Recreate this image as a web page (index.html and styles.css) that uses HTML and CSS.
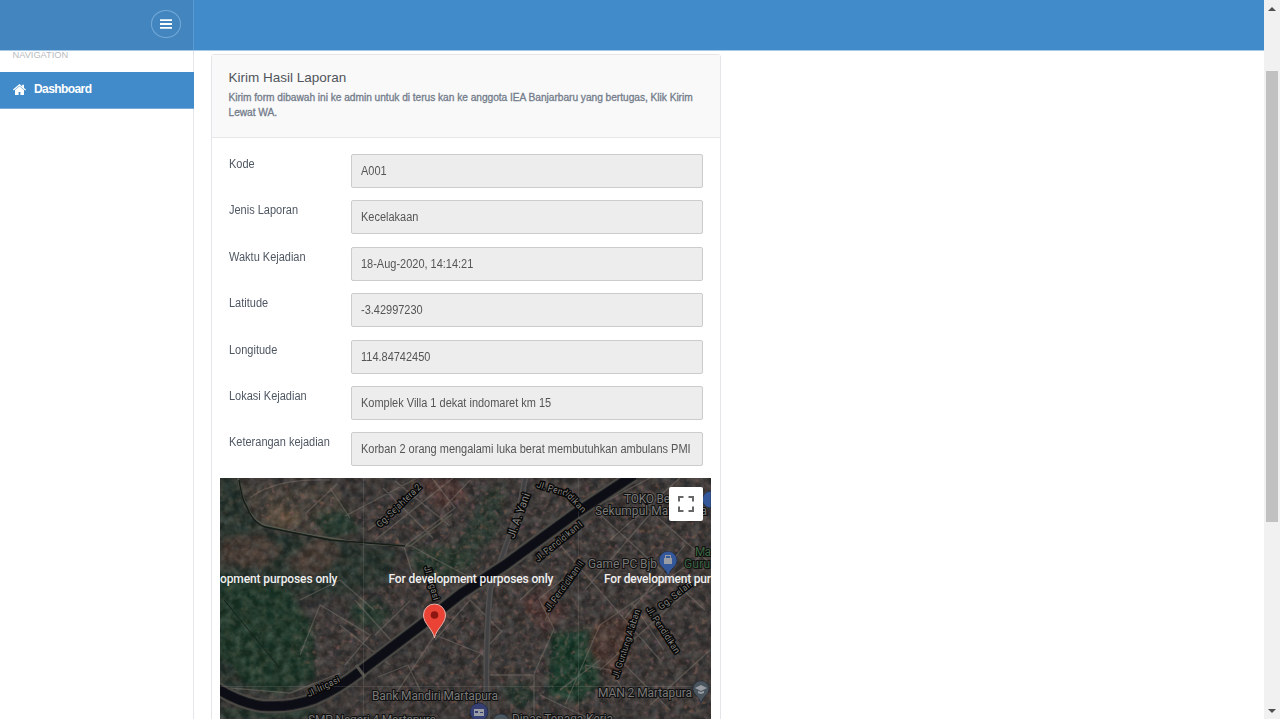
FILE: index.html
```html
<!DOCTYPE html>
<html lang="id">
<head>
<meta charset="utf-8">
<title>Kirim Hasil Laporan</title>
<link rel="stylesheet" href="styles.css">
</head>
<body>
<div class="app">
  <header class="topbar">
    <div class="brand">
      <button class="toggle" aria-label="Menu">
        <svg width="12" height="10" viewBox="0 0 12 10"><path d="M0 1.2h12M0 5h12M0 8.8h12" stroke="#fff" stroke-width="1.8"/></svg>
      </button>
    </div>
  </header>
  <div class="page">
    <nav class="sidebar">
      <div class="nav-title">NAVIGATION</div>
      <a class="nav-item">
        <svg width="13" height="11" viewBox="0 0 13 11" fill="#fff"><path d="M6.5 0 0 5.6l.8.9 5.7-4.8 5.7 4.8.8-.9-2-1.7V.7H9.2v1.6z"/><path d="M6.5 2.3 2 6.1V11h3.6V7.9h1.8V11H11V6.1z"/></svg>
        <span>Dashboard</span>
      </a>
    </nav>
    <main class="content">
      <section class="card">
        <div class="card-head">
          <h1>Kirim Hasil Laporan</h1>
          <p>Kirim form dibawah ini ke admin untuk di terus kan ke anggota IEA Banjarbaru yang bertugas, Klik Kirim<br>Lewat WA.</p>
        </div>
        <div class="form">
          <div class="row"><label>Kode</label><div class="field"><span>A001</span></div></div>
          <div class="row"><label>Jenis Laporan</label><div class="field"><span>Kecelakaan</span></div></div>
          <div class="row"><label>Waktu Kejadian</label><div class="field"><span>18-Aug-2020, 14:14:21</span></div></div>
          <div class="row"><label>Latitude</label><div class="field"><span>-3.42997230</span></div></div>
          <div class="row"><label>Longitude</label><div class="field"><span>114.84742450</span></div></div>
          <div class="row"><label>Lokasi Kejadian</label><div class="field"><span>Komplek Villa 1 dekat indomaret km 15</span></div></div>
          <div class="row"><label>Keterangan kejadian</label><div class="field"><span>Korban 2 orang mengalami luka berat membutuhkan ambulans PMI</span></div></div>
        </div>
        <div class="map">
          <svg class="map-art" viewBox="220 478 491 241" width="491" height="241">
            <defs>
              <filter id="grain" x="0" y="0" width="100%" height="100%" color-interpolation-filters="sRGB">
                <feTurbulence type="fractalNoise" baseFrequency=".12" numOctaves="3" seed="8"/>
                <feColorMatrix values="1 .4 0 0 -.46  .9 .3 .2 0 -.48  .8 .3 .3 0 -.49  0 0 0 0 .26"/>
              </filter>
              <filter id="roofs" x="0" y="0" width="100%" height="100%" color-interpolation-filters="sRGB">
                <feTurbulence type="fractalNoise" baseFrequency=".2" numOctaves="2" seed="21"/>
                <feColorMatrix values=".5 0 0 0 .22  0 .2 0 0 .27  0 0 .35 0 .2  3 2.4 0 0 -2.75" result="c"/>
                <feGaussianBlur in="SourceGraphic" stdDeviation="4" result="s"/>
                <feComposite in="c" in2="s" operator="in"/>
              </filter>
              <filter id="soft" x="-20%" y="-20%" width="140%" height="140%"><feGaussianBlur stdDeviation="3"/></filter>
              <filter id="edge"><feGaussianBlur stdDeviation=".5"/></filter>
              <path id="canal" d="M634 475 576 513 505 565 462 593 420 626 362 670Q336 690 314 699Q290 708 262 706Q240 703 216 688"/>
            </defs>
            <rect x="220" y="478" width="491" height="241" fill="#3c3938"/>
            <g filter="url(#soft)">
              <path fill="#26352d" d="M215 475h24l7 34 22 22 80 12 50 6-10 35-40 10-48 4-35 25-10 28-12 45H215z"/>
              <path fill="#1d3a2a" d="M215 575l70 12 28 38 2 55-40 15-28-8-16-24-16-5z"/>
              <path fill="#47423a" d="M240 485h92l20 24-26 27-66-12z"/>
              <path fill="#4c4039" d="M286 562l34-27 22 18-30 27zM222 540l40-6 20 18-20 16-42-4z"/>
              <path fill="#6a5a44" d="M270 520l8-18 8 10 16 2-10 12-14 1z"/>
              <path fill="#223b2e" d="M312 515l32-6 18 22-36 8zM348 605l32-5 12 14-14 14-24-4z"/>
              <path fill="#263a2f" d="M410 548l45-2 26 14-40 24-26-12z"/>
              <path fill="#2b3a31" d="M488 490l18-6-8 50-24 22-22-4z"/>
              <path fill="#163e29" d="M552 634l38-4 10 54-20 18-32-6z"/>
              <path fill="#4c3831" d="M594 622l44-12-10 62-18 8-22-32z"/>
              <path fill="#24382d" d="M500 688l28-6 8 16-18 12zM220 708h100l-10 11h-90z"/>
              <path fill="#503736" d="M518 600l30-12 20 24-24 22zM415 478h40l14 20-30 12z"/>
            </g>
            <rect x="220" y="478" width="491" height="241" filter="url(#grain)"/>
            <g class="roofs" filter="url(#roofs)">
              <path d="M360 500l60-22H711V719H330L440 630 420 610 370 630 360 590 420 560 350 530z M370 600L300 625 290 650 320 680 380 650z M250 482l95 6-20 50-65-16z M225 690h80l-15 14h-60z"/>
            </g>
            <g class="streets" filter="url(#edge)">
              <path d="M345 516 417 478M375 540l78-62M383 488l50 50M395 481l55 45M406 545 455 508 432 478M404 546l8 27M410 545q35 20 68 36M305 514l32-30M330 488l20 30M368 530l50-35M250 498q25-20 80-18M300 600l40-20 34 30M300 655l20-50 50 30-25 30M340 625l50 40M355 600l40 45M375 635l35-34M395 695l40-60 50 20M420 690l-12-25-30 12M470 480l-28 30M435 640l35-40 32 32M475 660l28-30M490 675h44v44M534 674l20-45-15-30 30-25M565 705l35-80 110-75M600 670l105-95M620 660l50 50M595 510l110 100M630 493l80 70M560 545l100 115M570 520l80-42M585 590l70-82M610 540l70-62M625 618l60-73M664 650l-30-45M650 705l60-55M585 665l25 5 20 30M540 695l50 24M560 690l40-30M230 688l60 5 50-20M520 600l30-28M545 620l20-35"/>
            </g>
            <g class="roads" filter="url(#edge)">
              <path d="M238 478q4 20 9 28 6 15 18 19l35 8 68 11 42 2 42-32" stroke="#55574b" stroke-width="1.500"/>
              <path d="M239 480q3 20 8 27 6 16 18 20l65 13 75 6" stroke="#141d18" stroke-width="1.500"/>
              <path d="M224 600l55 67" stroke="#15211a"/>
              <path d="M525 478q-4 30-17 62l-18 50q-5 55-3 129" stroke="#52504f" stroke-width="6"/>
              <path d="M525 478q-4 30-17 62l-18 50q-5 55-3 129" stroke="#424345" stroke-width="3"/>
            </g>
            <g class="canal" filter="url(#edge)">
              <use href="#canal" stroke="#4c4944" stroke-width="14"/>
              <use href="#canal" stroke="#1c1e23" stroke-width="10"/>
              <use href="#canal" stroke="#0b0d12" stroke-width="8"/>
              <path d="M356 665l9 12" stroke="#55534e" stroke-width="3"/>
            </g>
            <path d="M363.500 478V719M578.500 478V719M220 686.500H711" stroke="#999" stroke-opacity=".18"/>
            <g class="street-name">
              <text transform="translate(380 528) rotate(-44)" textLength="58">Gg. Sejahtera 2</text>
              <text transform="translate(514 539) rotate(-70)" textLength="47" font-size="11">Jl. A. Yani</text>
              <text transform="translate(536 487) rotate(17)" textLength="32">Jl. Pend</text>
              <text transform="translate(565 495) rotate(46)" textLength="25">idikan</text>
              <text transform="translate(538 562) rotate(-39)" textLength="58">Jl. Pendidikan I</text>
              <text transform="translate(549 612) rotate(-54)" textLength="60">Jl. Pendidikan II</text>
              <text transform="translate(424 567) rotate(74)" textLength="35">Jl. Irigasi</text>
              <text transform="translate(309 697) rotate(-26)" textLength="35">Jl. Irigasi</text>
              <text transform="translate(618 679) rotate(-72)" textLength="72">Jl. Guntung Alaban</text>
              <text transform="translate(646 609) rotate(57)" textLength="54">Jl. Pendidikan</text>
              <text transform="translate(661 610) rotate(-38)" textLength="40">Gg. Selan</text>
            </g>
            <g class="place-name">
              <text x="624" y="503" textLength="46">TOKO Be</text>
              <text x="595" y="515" textLength="112">Sekumpul Martapura</text>
              <text x="588" y="568" textLength="69">Game PC Bjb</text>
              <text class="green" x="695" y="556" textLength="16">Ma</text>
              <text class="green" x="684" y="568" textLength="26">Guru</text>
              <text x="372" y="700" textLength="126">Bank Mandiri Martapura</text>
              <text x="598" y="697" textLength="94">MAN 2 Martapura</text>
              <text x="308" y="724" textLength="128">SMP Negeri 4 Martapura</text>
              <text x="512" y="723" textLength="101">Dinas Tenaga Kerja</text>
            </g>
            <g stroke="#182337" stroke-width=".5">
              <path fill="#34589a" d="M668 576q-2-6-6-9a9 9 0 1 1 12 0q-4 3-6 9z"/>
              <path fill="#34589a" d="M711 491a8 8 0 0 0 0 17z"/>
              <path fill="#4a555e" d="M701 703q-1-4-5-8a8 8 0 1 1 10 0q-4 4-5 8z"/>
              <circle cx="479" cy="712" r="9" fill="#363f74"/>
              <circle cx="501" cy="722" r="8" fill="#4a555e"/>
            </g>
            <g fill="#9a9da4">
              <path d="M664 558h8v6h-8zM666 558v-2h4v2h1v-3h-6v3z"/>
              <path d="M695 688l6-3 6 3-6 3zM698 691v2l3 1 3-1v-2l-3 1z"/>
              <path d="M474 709h10v7h-10z"/>
              <path d="M475 711h3v2h-3zM480 712h3v1h-3z" fill="#363f74"/>
            </g>
            <g class="notice">
              <text x="220" y="583" textLength="117.500">opment purposes only</text>
              <text x="388.500" y="583" textLength="165">For development purposes only</text>
              <text x="604" y="583" textLength="107">For development pur</text>
            </g>
            <path d="M434.500 638C433 629 423.500 624 423.500 615a11 11 0 0 1 22 0c0 9-9.500 14-11 23z" fill="#ea4335" stroke="#e6b5af" stroke-width="1"/>
            <circle cx="434.500" cy="615" r="3.800" fill="#8d1710"/>
          </svg>
          <button class="fullscreen" aria-label="Fullscreen">
            <svg width="16" height="16" viewBox="0 0 16 16"><path d="M1 5.500V1H5.500M10.500 1H15V5.500M15 10.500V15H10.500M5.500 15H1V10.500" fill="none" stroke="#666" stroke-width="2"/></svg>
          </button>
        </div>
      </section>
    </main>
  </div>
</div>
<div class="scrollbar">
  <svg width="8" height="4" viewBox="0 0 8 4"><path d="M4 0 8 4H0z" fill="#505050"/></svg>
  <div class="thumb"></div>
  <svg width="8" height="4" viewBox="0 0 8 4"><path d="M4 4 8 0H0z" fill="#505050"/></svg>
</div>
</body>
</html>
```

FILE: styles.css
```css
* { box-sizing: border-box; }
body {
  margin: 0;
  height: 719px;
  overflow: hidden;
  display: flex;
  background: #fff;
  color: #58606b;
  font-family: "Liberation Sans", Arial, sans-serif;
  font-size: 12px;
}
.app { flex: 1; height: 719px; overflow: hidden; display: flex; flex-direction: column; }
.topbar { flex: 0 0 51px; background: #428bca; border-bottom: 1px solid #a5c8e5; }
.brand {
  width: 194px;
  height: 50px;
  padding: 10px 12px 0 0;
  display: flex;
  justify-content: flex-end;
  align-items: flex-start;
  background: #4285bf;
  border-right: 1px solid #5a9ad1;
}
.toggle {
  width: 30px;
  height: 28px;
  padding: 0;
  display: flex;
  align-items: center;
  justify-content: center;
  border: 1px solid #75aad9;
  border-radius: 50%;
  background: none;
}
.page { flex: 1; min-height: 0; display: flex; }
.sidebar { flex: 0 0 194px; min-width: 0; border-right: 1px solid #e4e6ea; }
.nav-title {
  height: 21px;
  padding-left: 12.500px;
  color: #b9bcc0;
  font-size: 9.250px;
  line-height: 8px;
}
.nav-item {
  width: 194px;
  height: 37px;
  padding: 0 0 2px 13px;
  display: flex;
  align-items: center;
  gap: 8px;
  background: #428bca;
  border-bottom: 1px solid #78abd8;
  color: #fff;
  font-size: 12px;
  font-weight: bold;
  letter-spacing: -.58px;
}
.content { padding: 3px 0 0 17px; }
.card { width: 509.500px; height: 700px; border: 1px solid #e3e5e8; border-radius: 3px; }
.card-head { height: 83px; padding: 14px 16.500px 0; background: #f9f9f9; border-bottom: 1px solid #e6e7e9; }
.card-head h1 { margin: 0; color: #50555c; font-size: 13.500px; font-weight: normal; line-height: 18px; }
.card-head p {
  margin: 3px 0 0;
  color: #737c8b;
  font-size: 10.200px;
  line-height: 15px;
  letter-spacing: -.035px;
  white-space: nowrap;
  -webkit-text-stroke: .3px #737c8b;
}
.form { padding: 16px 16.500px 0; height: 340px; }
.row { height: 46.400px; display: flex; }
.row label {
  flex: 0 0 122.500px;
  padding-top: 3px;
  line-height: 14px;
  color: #4f5763;
  white-space: nowrap;
  transform: scaleX(.916);
  transform-origin: left;
}
.field {
  flex: 0 0 352px;
  min-width: 0;
  height: 34px;
  padding: 0 9px;
  border: 1px solid #ccc;
  border-radius: 2px;
  background: #ededed;
  color: #555;
  line-height: 32px;
  white-space: nowrap;
}
.field span { display: block; width: 362px; transform: scaleX(.915); transform-origin: left; }
.map { position: relative; margin: 0 8px; height: 260px; overflow: hidden; }
.map-art { display: block; }
.fullscreen {
  position: absolute;
  top: 9px;
  right: 8.500px;
  width: 34px;
  height: 34px;
  padding: 0;
  display: flex;
  align-items: center;
  justify-content: center;
  border: 0;
  border-radius: 2px;
  background: #fff;
}
.roofs { opacity: .4; }
.streets { fill: none; stroke: #857d75; stroke-width: 1.300px; opacity: .42; }
.roads { fill: none; }
.canal { fill: none; }
.street-name, .place-name, .notice { font-family: Roboto, sans-serif; }
.street-name { font-size: 9px; fill: #858480; stroke: #080808; stroke-width: 2.800px; paint-order: stroke; }
.place-name { font-size: 12px; fill: #7a7a79; stroke: #101010; stroke-width: 2px; paint-order: stroke; }
.green { fill: #3a6542; }
.notice { font-size: 12px; font-weight: 500; fill: #f0f0f0; }
.scrollbar {
  flex: 0 0 16px;
  height: 719px;
  padding: 7px 0 6px;
  display: flex;
  flex-direction: column;
  align-items: center;
  background: #f1f1f1;
}
.thumb { width: 12px; height: 451px; margin: 60px 0 auto; background: #c1c1c1; }
```
